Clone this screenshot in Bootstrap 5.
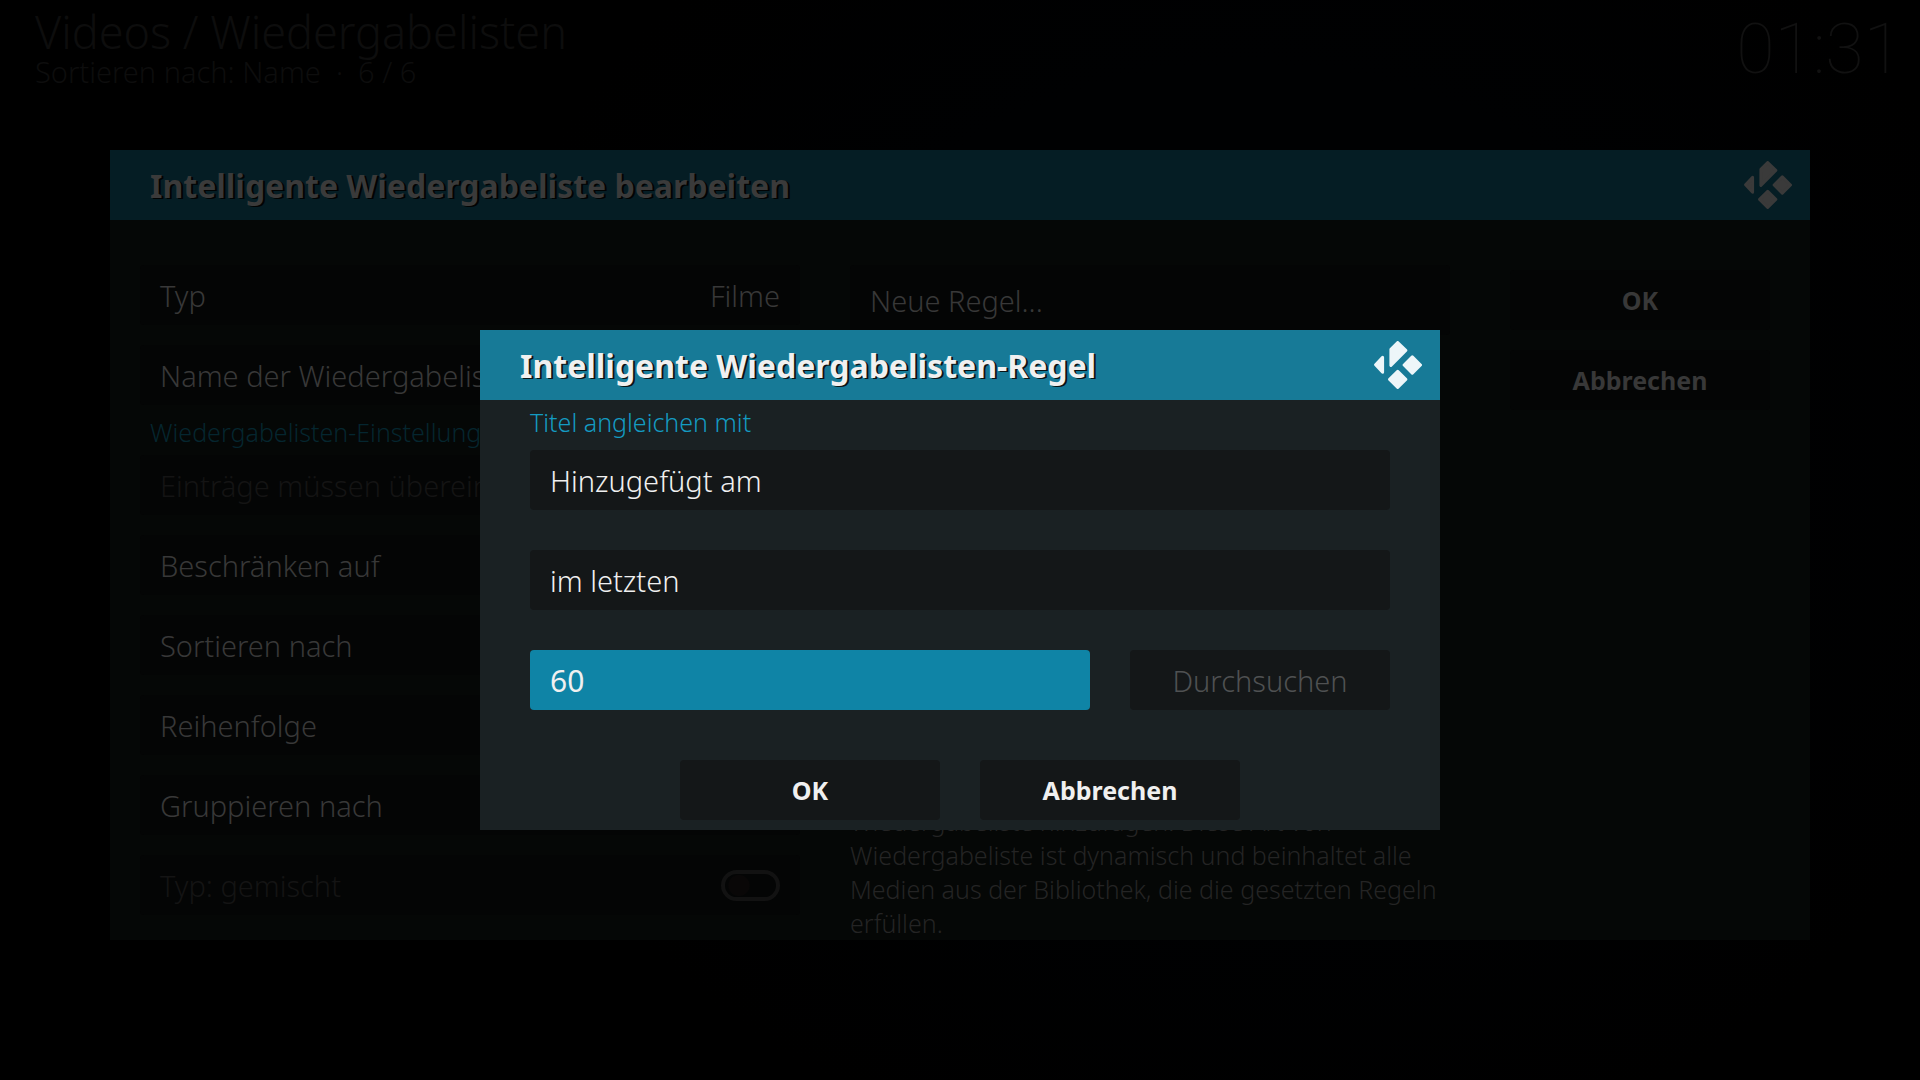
<!DOCTYPE html>
<html lang="de">
<head>
<meta charset="utf-8">
<meta name="viewport" content="width=device-width, initial-scale=1">
<title>Intelligente Wiedergabelisten-Regel</title>
<link href="https://cdn.jsdelivr.net/npm/bootstrap@5.3.0/dist/css/bootstrap.min.css" rel="stylesheet">
<style>
  body {
    font-family: "Noto Sans", sans-serif;
    font-weight: 350;
    font-size: 29px;
    line-height: 40px;
    color: #383838;
    background: #000 radial-gradient(ellipse 800px 700px at 65% 45%, #000102 60%, #000 100%);
  }
  .topbar { padding: 0 18px 0 35px; height: 150px; color: #0d0d0d; }
  .crumb { font-size: 45px; line-height: 54px; padding-top: 5px; font-weight: 300; }
  .sorting { line-height: 26px; }
  .clock { font-family: Roboto, sans-serif; font-weight: 100; font-size: 70px; line-height: 98px; color: #111; }

  .panel-head { height: 70px; padding: 0 18px 0 40px; }
  .panel-head h1, .panel-head h2 { font-size: 32px; line-height: 44px; padding-top: 2px; font-weight: 700; }
  .logo { width: 48px; height: 48px; fill: currentColor; stroke: currentColor; stroke-width: 3; stroke-linejoin: round; }

  .backdrop-panel { margin: 0 110px; background: #050706; }
  .backdrop-panel .panel-head { background: #051d24; color: #3a3a3a; text-shadow: 2px 1px 0 #010303; }
  .panel-cols { padding: 45px 40px 0 30px; }
  .settings { flex: 66 1 0; margin-right: 50px; padding-bottom: 25px; }
  .rules { flex: 60 1 0; margin-right: 60px; }
  .actions { width: 260px; padding-top: 5px; }
  .stack { gap: 20px; }

  .tile { border: 0; border-radius: 4px; background: #040505; color: inherit; height: 60px; padding: 2px 20px 0; font-weight: 350; }
  .tile:disabled, .tile-off { color: #141414; }
  .tile-off { padding-top: 0; }
  .tile-off label { padding-top: 2px; }
  .tile-tall { height: 70px; }
  .tile-strong { font-size: 25px; font-weight: 700; padding-top: 0; }
  .section-title { font-size: 25px; line-height: 45px; padding: 5px 10px 0; color: #05262f; font-weight: 350; }
  .about { font-size: 25px; line-height: 34px; color: #242424; }

  .toggle { appearance: none; width: 59px; height: 31px; border: 4px solid #121212; border-radius: 16px;
    background: radial-gradient(circle at 14px 50%, #090707 10px, transparent 11px); }

  .overlay { padding-top: 330px; }
  .rule-dialog { background: #1a2123; color: #f0f0f0; }
  .rule-dialog .panel-head { background: #177a97; text-shadow: 2px 1px 0 #0a1416; }
  .rule-dialog .logo { color: #edf6f9; }
  .rule-body { padding: 0 50px 10px; }
  .rule-label { font-size: 25px; line-height: 44px; margin-bottom: 6px; color: #149bc2; }
  .rule-dialog .tile { background: #141718; }
  .rule-dialog select.tile { appearance: none; }
  .rule-dialog .value-field { background: #0f84a6; font-size: 30px; font-weight: 400; padding-top: 0; min-width: 0; }
  .rule-dialog .tile:disabled { color: #4f5152; opacity: 1; }
  .gap-tile { gap: 40px; }
  .side-width { width: 260px; }
  .confirm { margin-top: 50px; }
</style>
</head>
<body class="min-vh-100">

<svg class="d-none" aria-hidden="true">
  <symbol id="kodi" viewBox="0 0 48 48">
    <path d="M23.7 1.5 31.8 9.4 16.9 24.4V8.2Z"/>
    <path d="M38.3 15.8 46.5 24l-8.2 8.2L30.1 24Z"/>
    <path d="M23.7 30.3l8.1 8.1-8.1 8.1-8.1-8.1Z"/>
    <path d="M1.6 23.8 8.6 16.4V31.2Z"/>
  </symbol>
</svg>

<header class="topbar d-flex justify-content-between">
  <div>
    <div class="crumb">Videos / Wiedergabelisten</div>
    <div class="sorting">Sortieren nach: Name &nbsp;·&nbsp; 6 / 6</div>
  </div>
  <time class="clock">01:31</time>
</header>

<main class="backdrop-panel">
  <div class="panel-head d-flex align-items-center justify-content-between">
    <h1 class="m-0">Intelligente Wiedergabeliste bearbeiten</h1>
    <svg class="logo" aria-hidden="true"><use href="#kodi"/></svg>
  </div>
  <div class="panel-cols d-flex">
    <section class="settings d-flex flex-column">
      <div class="stack d-flex flex-column">
        <button type="button" class="tile d-flex align-items-center justify-content-between"><span>Typ</span><span>Filme</span></button>
        <button type="button" class="tile text-start">Name der Wiedergabeliste</button>
      </div>
      <h2 class="section-title m-0">Wiedergabelisten-Einstellungen</h2>
      <div class="stack d-flex flex-column">
        <button type="button" class="tile text-start" disabled>Einträge müssen übereinstimmen</button>
        <button type="button" class="tile text-start">Beschränken auf</button>
        <button type="button" class="tile text-start">Sortieren nach</button>
        <button type="button" class="tile text-start">Reihenfolge</button>
        <button type="button" class="tile text-start">Gruppieren nach</button>
        <div class="tile tile-off d-flex align-items-center justify-content-between">
          <label for="mixed">Typ: gemischt</label>
          <input id="mixed" type="checkbox" role="switch" class="toggle" disabled>
        </div>
      </div>
    </section>
    <section class="rules d-flex flex-column justify-content-between">
      <button type="button" class="tile tile-tall text-start">Neue Regel...</button>
      <p class="about m-0">Wiedergabeliste hinzufügen. Diese Art von Wiedergabeliste ist dynamisch und beinhaltet alle Medien aus der Bibliothek, die die gesetzten Regeln erfüllen.</p>
    </section>
    <div class="actions stack d-flex flex-column">
      <button type="button" class="tile tile-strong">OK</button>
      <button type="button" class="tile tile-strong">Abbrechen</button>
    </div>
  </div>
</main>

<div class="overlay position-absolute top-0 start-0 w-100 d-flex justify-content-center">
  <form class="rule-dialog w-50" role="dialog" aria-labelledby="rule-title">
    <div class="panel-head d-flex align-items-center justify-content-between">
      <h2 id="rule-title" class="m-0">Intelligente Wiedergabelisten-Regel</h2>
      <svg class="logo" aria-hidden="true"><use href="#kodi"/></svg>
    </div>
    <div class="rule-body">
      <label for="field" class="rule-label d-block">Titel angleichen mit</label>
      <div class="d-flex flex-column gap-tile">
        <select id="field" class="tile w-100"><option>Hinzugefügt am</option></select>
        <select class="tile w-100" aria-label="Operator"><option>im letzten</option></select>
        <div class="d-flex gap-tile">
          <input type="text" class="tile value-field flex-fill" value="60" aria-label="Wert">
          <button type="button" class="tile side-width" disabled>Durchsuchen</button>
        </div>
      </div>
      <div class="confirm d-flex justify-content-center gap-tile">
        <button type="submit" class="tile tile-strong side-width">OK</button>
        <button type="button" class="tile tile-strong side-width">Abbrechen</button>
      </div>
    </div>
  </form>
</div>

<script src="https://cdn.jsdelivr.net/npm/bootstrap@5.3.0/dist/js/bootstrap.bundle.min.js"></script>
</body>
</html>
